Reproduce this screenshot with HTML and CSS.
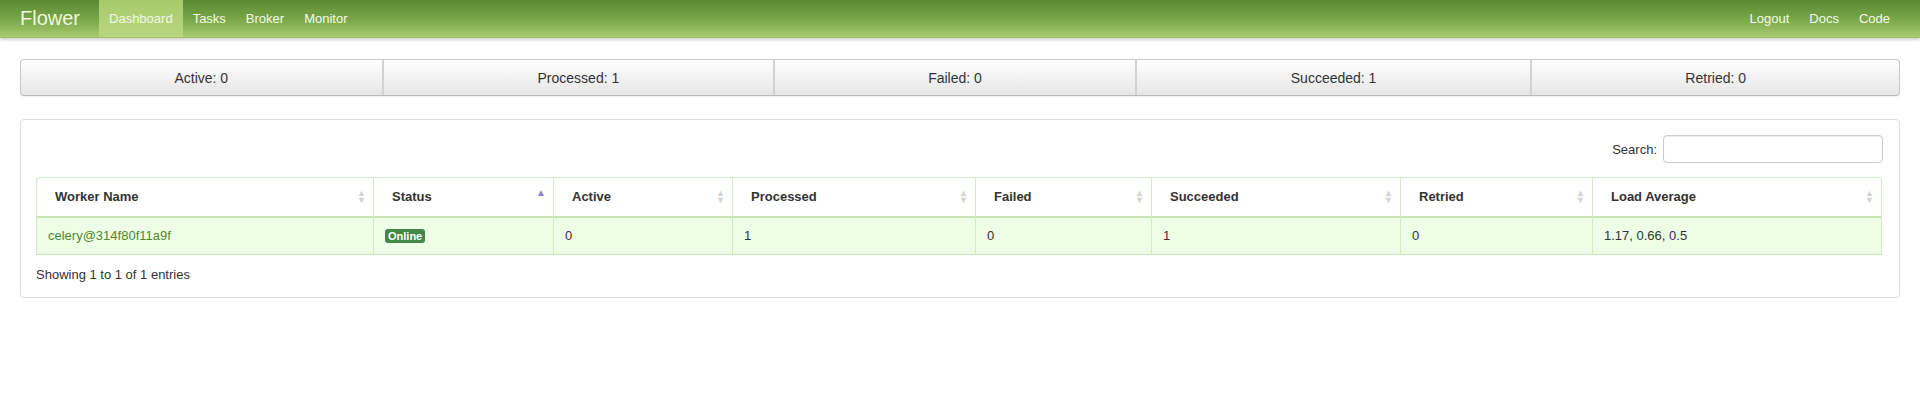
FILE: index.html
```html
<!DOCTYPE html>
<html>
<head>
<meta charset="utf-8">
<title>Flower</title>
<link rel="stylesheet" href="styles.css">
</head>
<body>
<nav class="navbar">
  <div class="nav-left">
    <a class="brand">Flower</a>
    <a class="nav-link active">Dashboard</a>
    <a class="nav-link">Tasks</a>
    <a class="nav-link">Broker</a>
    <a class="nav-link">Monitor</a>
  </div>
  <div class="nav-right">
    <a class="nav-link">Logout</a>
    <a class="nav-link">Docs</a>
    <a class="nav-link">Code</a>
  </div>
</nav>
<main class="container">
  <div class="stats">
    <div class="stat">Active: 0</div>
    <div class="stat">Processed: 1</div>
    <div class="stat">Failed: 0</div>
    <div class="stat">Succeeded: 1</div>
    <div class="stat">Retried: 0</div>
  </div>
  <section class="panel">
    <div class="search-row">
      <label class="search-label">Search:</label>
      <input class="search-input" type="text">
    </div>
    <table class="workers">
      <colgroup>
        <col class="c1"><col class="c2"><col class="c3"><col class="c4"><col class="c5"><col class="c6"><col class="c7"><col class="c8">
      </colgroup>
      <thead>
        <tr>
          <th class="sortable">Worker Name</th>
          <th class="sorted">Status</th>
          <th class="sortable">Active</th>
          <th class="sortable">Processed</th>
          <th class="sortable">Failed</th>
          <th class="sortable">Succeeded</th>
          <th class="sortable">Retried</th>
          <th class="sortable">Load Average</th>
        </tr>
      </thead>
      <tbody>
        <tr>
          <td><a class="worker-link">celery@314f80f11a9f</a></td>
          <td><span class="badge">Online</span></td>
          <td>0</td>
          <td>1</td>
          <td>0</td>
          <td>1</td>
          <td>0</td>
          <td>1.17, 0.66, 0.5</td>
        </tr>
      </tbody>
    </table>
    <div class="info">Showing 1 to 1 of 1 entries</div>
  </section>
</main>
</body>
</html>
```
FILE: styles.css
```css
* { box-sizing: border-box; }
body {
  margin: 0;
  font-family: "Liberation Sans", Arial, sans-serif;
  font-size: 13px;
  color: #333;
  background: #fff;
}
.navbar {
  height: 38px;
  display: flex;
  justify-content: space-between;
  align-items: stretch;
  background: linear-gradient(to bottom, #5a8a33 0%, #7aa84a 55%, #a9cc70 100%);
  box-shadow: 0 2px 3px rgba(0,0,0,0.18);
  border-bottom: 1px solid #9fc067;
}
.nav-left, .nav-right { display: flex; align-items: stretch; }
.nav-left { padding-left: 20px; }
.nav-right { padding-right: 20px; }
.brand {
  display: flex;
  align-items: center;
  font-size: 20px;
  color: #eef8dc;
  padding-right: 19px;
}
.nav-link {
  display: flex;
  align-items: center;
  padding: 0 10px;
  color: #f4fbe8;
  font-size: 13px;
}
.nav-link.active {
  background: linear-gradient(to bottom, #a7c96b, #b9d781);
  color: #f2f9e4;
}
.container { padding: 21px 20px 0 20px; }
.stats {
  display: grid;
  grid-template-columns: 361fr 392fr 362fr 396fr 369fr;
  height: 37px;
  border: 1px solid #c8c8c8;
  border-bottom-color: #b8b8b8;
  border-radius: 4px;
  background: linear-gradient(to bottom, #ffffff, #e6e6e6);
  box-shadow: 0 1px 1px rgba(0,0,0,0.06);
}
.stat {
  display: flex;
  align-items: center;
  justify-content: center;
  font-size: 14px;
  color: #333;
  border-left: 2px solid #d2d2d2;
}
.stat:first-child { border-left: none; }
.panel {
  margin-top: 23px;
  border: 1px solid #ddd;
  border-radius: 4px;
  padding: 15px 16px 15px 15px;
  box-shadow: 0 1px 1px rgba(0,0,0,0.04);
}
.search-row {
  display: flex;
  justify-content: flex-end;
  align-items: center;
  gap: 6px;
}
.search-label { font-size: 13px; color: #333; }
.search-input {
  width: 220px;
  height: 28px;
  border: 1px solid #ccc;
  border-radius: 4px;
  box-shadow: inset 0 1px 1px rgba(0,0,0,0.075);
}
.workers {
  margin-top: 14px;
  width: 1846px;
  border-collapse: separate;
  border-spacing: 0;
  table-layout: fixed;
}
.c1 { width: 337px; }
.c2 { width: 180px; }
.c3 { width: 179px; }
.c4 { width: 243px; }
.c5 { width: 176px; }
.c6 { width: 249px; }
.c7 { width: 192px; }
.c8 { width: 290px; }
.workers th {
  text-align: left;
  font-weight: bold;
  font-size: 13px;
  color: #333;
  height: 41px;
  padding: 0 18px 1px 18px;
  background: #fff;
  border-top: 1px solid #d6ebc9;
  border-left: 1px solid #d6ebc9;
  border-bottom: 2px solid #c8e4b4;
  position: relative;
}
.workers th:first-child { border-top-left-radius: 4px; }
.workers th:last-child { border-right: 1px solid #d6ebc9; border-top-right-radius: 4px; }
.workers th::after {
  position: absolute;
  right: 7px;
  top: 50%;
  transform: translateY(-50%);
  white-space: pre;
}
.workers th.sortable::after {
  content: "\25B2\A\25BC";
  font-size: 9px;
  line-height: 7px;
  color: #d2d2d2;
}
.workers th.sorted::after {
  content: "\25B2";
  font-size: 10px;
  line-height: 10px;
  color: #8585cc;
  margin-top: -4px;
}
.workers td {
  height: 37px;
  padding: 0 11px 1px 11px;
  background: #edfde6;
  border-left: 1px solid #d0eac2;
  border-bottom: 1px solid #c9e5b9;
  font-size: 13px;
  color: #333;
  vertical-align: middle;
}
.workers td:last-child { border-right: 1px solid #d0eac2; }
.worker-link { color: #4e8a36; }
.badge {
  display: inline-block;
  background: #468847;
  color: #fff;
  font-weight: bold;
  font-size: 11px;
  line-height: 14px;
  padding: 0 3px;
  border-radius: 3px;
}
.info {
  margin-top: 12px;
  font-size: 13px;
  color: #333;
}
```
